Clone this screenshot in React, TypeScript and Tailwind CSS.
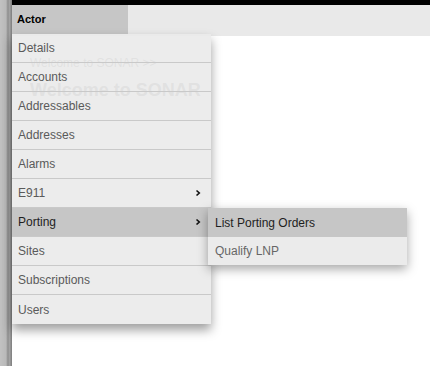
import React from "react";

const items = [
  "Details",
  "Accounts",
  "Addressables",
  "Addresses",
  "Alarms",
  "E911",
  "Porting",
  "Sites",
  "Subscriptions",
  "Users",
];

function Chevron() {
  return (
    <svg width="6" height="8" viewBox="0 0 6 8" className="shrink-0">
      <path d="M1.5 1.5 L4.3 4 L1.5 6.5" fill="none" stroke="#111" strokeWidth="1.6" />
    </svg>
  );
}

export default function App() {
  return (
    <div
      className="relative flex h-[366px] w-[430px] overflow-hidden bg-white"
      style={{ fontFamily: '"Liberation Sans", Arial, sans-serif' }}
    >
      <div className="h-full w-[12px] shrink-0 bg-[linear-gradient(to_right,#c2c2c2_0%,#b9b9b9_50%,#8e8e8e_66%,#a3a3a3_80%,#7c7c7c_100%)]" />
      <div className="relative flex flex-1 flex-col">
        <div className="h-[5px] bg-black" />
        <div className="flex h-[31px] bg-[#e9e9e9]">
          <div className="flex h-[29px] w-[116px] items-center bg-[#c6c6c6] pl-[5px] text-[11px] font-bold text-black">
            Actor
          </div>
        </div>
        <div className="flex flex-col pl-[18px] pt-[20px]">
          <div className="text-[12px] leading-[14px] text-[#8a8a8a]">Welcome to SONAR &gt;&gt;</div>
          <div className="mt-[9px] text-[18px] font-bold leading-[22px] text-[#8a8a8a]">Welcome to SONAR</div>
        </div>

        <div className="absolute left-0 top-[34px] w-[199px] bg-[#eaeaea]/90 shadow-[0_6px_10px_rgba(0,0,0,0.38)]">
          {items.map((it, i) => {
            const active = it === "Porting";
            const hasSub = it === "E911" || it === "Porting";
            const last = i === items.length - 1;
            return (
              <div
                key={it}
                className={`relative flex h-[29px] items-center justify-between pl-[6px] pr-[10px] text-[12px] ${
                  last ? "" : "border-b border-[#c9c9c9]"
                } ${active ? "bg-[#c6c6c6] text-[#1e1e1e]" : "text-[#5a5a5a]"}`}
              >
                <span>{it}</span>
                {hasSub && <Chevron />}
                {active && (
                  <div className="absolute left-[196px] top-0 z-10 w-[199px] bg-[#ebebeb] shadow-[0_4px_10px_rgba(0,0,0,0.35)]">
                    <div className="flex h-[29px] items-center bg-[#c6c6c6] pl-[7px] text-[12px] text-[#1e1e1e]">
                      List Porting Orders
                    </div>
                    <div className="flex h-[28px] items-center pl-[7px] text-[12px] text-[#666]">
                      Qualify LNP
                    </div>
                  </div>
                )}
              </div>
            );
          })}
        </div>
      </div>
    </div>
  );
}
